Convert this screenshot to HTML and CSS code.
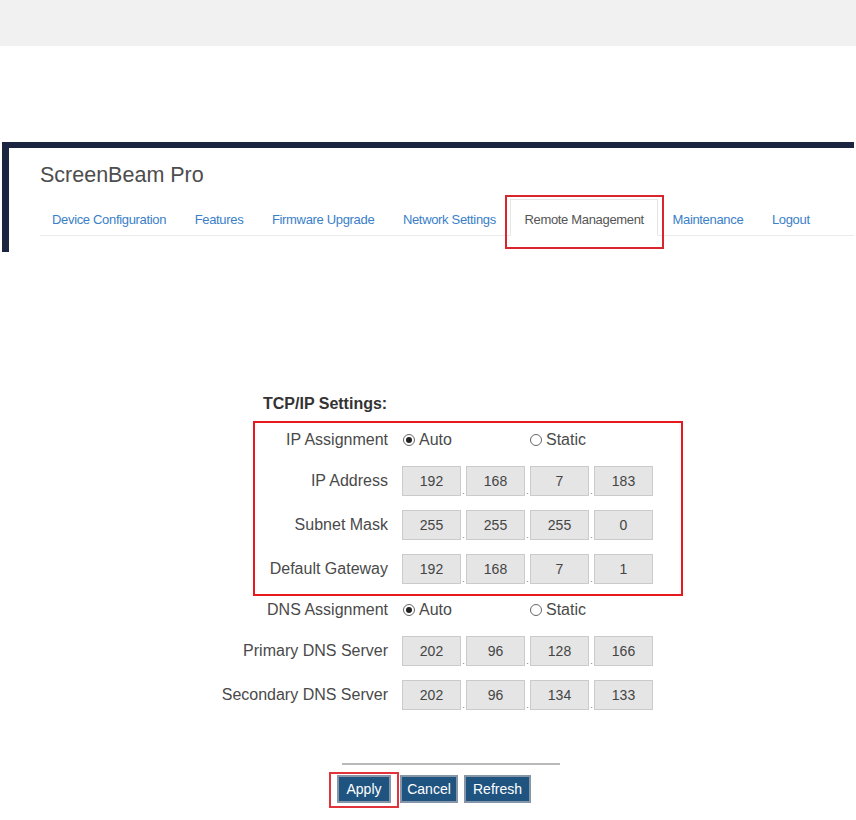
FILE: index.html
```html
<!DOCTYPE html>
<html lang="en">
<head>
    <meta charset="UTF-8">
    <meta name="viewport" content="width=device-width, initial-scale=1.0">
    <title>ScreenBeam Pro - Remote Management</title>
    <link rel="stylesheet" href="styles.css">
</head>
<body>
    <div class="top-bar"></div>

    <div class="shot-header">
        <h1 class="brand">ScreenBeam Pro</h1>
        <ul class="nav-tabs">
            <li><a href="#">Device Configuration</a></li>
            <li><a href="#">Features</a></li>
            <li><a href="#">Firmware Upgrade</a></li>
            <li><a href="#">Network Settings</a></li>
            <li class="active marked"><a href="#">Remote Management</a></li>
            <li><a href="#">Maintenance</a></li>
            <li><a href="#">Logout</a></li>
        </ul>
    </div>

    <form class="tcpip-form" action="#" method="POST">
        <h3 class="section-title">TCP/IP Settings:</h3>

        <div class="marked-group">
            <div class="form-row radio-row">
                <span class="row-label">IP Assignment</span>
                <div class="choices">
                    <label class="choice first"><span class="radio checked"></span>Auto</label>
                    <label class="choice"><span class="radio"></span>Static</label>
                </div>
            </div>
            <div class="form-row">
                <span class="row-label">IP Address</span>
                <div class="octets">
                    <input type="text" value="192" readonly><span class="dot">.</span>
                    <input type="text" value="168" readonly><span class="dot">.</span>
                    <input type="text" value="7" readonly><span class="dot">.</span>
                    <input type="text" value="183" readonly>
                </div>
            </div>
            <div class="form-row">
                <span class="row-label">Subnet Mask</span>
                <div class="octets">
                    <input type="text" value="255" readonly><span class="dot">.</span>
                    <input type="text" value="255" readonly><span class="dot">.</span>
                    <input type="text" value="255" readonly><span class="dot">.</span>
                    <input type="text" value="0" readonly>
                </div>
            </div>
            <div class="form-row">
                <span class="row-label">Default Gateway</span>
                <div class="octets">
                    <input type="text" value="192" readonly><span class="dot">.</span>
                    <input type="text" value="168" readonly><span class="dot">.</span>
                    <input type="text" value="7" readonly><span class="dot">.</span>
                    <input type="text" value="1" readonly>
                </div>
            </div>
        </div>

        <div class="form-row radio-row dns-row">
            <span class="row-label">DNS Assignment</span>
            <div class="choices">
                <label class="choice first"><span class="radio checked"></span>Auto</label>
                <label class="choice"><span class="radio"></span>Static</label>
            </div>
        </div>
        <div class="form-row">
            <span class="row-label">Primary DNS Server</span>
            <div class="octets">
                <input type="text" value="202" readonly><span class="dot">.</span>
                <input type="text" value="96" readonly><span class="dot">.</span>
                <input type="text" value="128" readonly><span class="dot">.</span>
                <input type="text" value="166" readonly>
            </div>
        </div>
        <div class="form-row">
            <span class="row-label">Secondary DNS Server</span>
            <div class="octets">
                <input type="text" value="202" readonly><span class="dot">.</span>
                <input type="text" value="96" readonly><span class="dot">.</span>
                <input type="text" value="134" readonly><span class="dot">.</span>
                <input type="text" value="133" readonly>
            </div>
        </div>

        <div class="divider"></div>

        <div class="button-row">
            <span class="marked-btn"><button type="submit" class="btn btn-apply">Apply</button></span>
            <button type="button" class="btn btn-cancel">Cancel</button>
            <button type="button" class="btn btn-refresh">Refresh</button>
        </div>
    </form>
</body>
</html>
```

FILE: styles.css
```css
/* ScreenBeam remote management page */
body {
    margin: 0;
    font-family: "Liberation Sans", Arial, sans-serif;
    background-color: #fff;
    color: #444;
}
.top-bar {
    height: 46px;
    background-color: #f1f1f1;
}

/* header screenshot */
.shot-header {
    margin: 96px 0 0 2px;
    width: 814px;
    height: 104px;
    border-top: 6px solid #1b2541;
    border-left: 7px solid #1b2541;
    padding-left: 31px;
}
.brand {
    margin: 0;
    padding-top: 15px;
    font-size: 21.5px;
    font-weight: normal;
    line-height: 24px;
    color: #4d4d4d;
}
.nav-tabs {
    display: flex;
    list-style: none;
    margin: 12px 0 0 0;
    padding: 0;
    border-bottom: 1px solid #ebebeb;
}
.nav-tabs li {
    position: relative;
    margin-bottom: -1px;
}
.nav-tabs a {
    display: block;
    padding: 13px 13.3px 8px;
    font-size: 13px;
    line-height: 14px;
    letter-spacing: -0.33px;
    color: #3a80c8;
    text-decoration: none;
    border: 1px solid transparent;
}
.nav-tabs li:first-child a {
    padding-left: 11px;
}
.nav-tabs .active a {
    color: #555;
    border-color: #e6e6e6;
    border-bottom-color: #fff;
    background-color: #fff;
}
.nav-tabs .marked::after {
    content: "";
    position: absolute;
    top: -4px;
    left: -5px;
    right: -6px;
    bottom: -13px;
    border: 2px solid #d9262e;
}

/* form */
.tcpip-form {
    margin: 143px 0 0 255px;
    padding-bottom: 20px;
    width: 426px;
}
.section-title {
    margin: 0 0 8px 8px;
    font-size: 16px;
    line-height: 18px;
    color: #333;
}
.marked-group {
    margin: 0 -2px;
    border: 2px solid #e8191d;
    padding: 5px 0 10px;
}
.form-row {
    display: grid;
    grid-template-columns: 133px auto;
    column-gap: 14px;
    align-items: center;
    margin-top: 14px;
}
.marked-group .form-row:first-child {
    margin-top: 0;
}
.dns-row {
    margin-top: 2px;
}
.row-label {
    display: flex;
    justify-content: flex-end;
    font-size: 16px;
    white-space: nowrap;
    color: #4a4a4a;
}
.radio-row {
    height: 24px;
}
.choices {
    display: flex;
    align-items: center;
    font-size: 16px;
    color: #4a4a4a;
}
.choice {
    display: flex;
    align-items: center;
}
.choice.first {
    width: 127px;
}
.radio {
    display: inline-flex;
    justify-content: center;
    align-items: center;
    box-sizing: border-box;
    width: 12px;
    height: 12px;
    margin: 0 4px 0 1px;
    border: 1px solid #666;
    border-radius: 50%;
    background-color: #fff;
}
.radio.checked::before {
    content: "";
    width: 6px;
    height: 6px;
    border-radius: 50%;
    background-color: #222;
}
.octets {
    display: flex;
    align-items: flex-end;
}
.octets input {
    width: 59px;
    height: 30px;
    box-sizing: border-box;
    border: 1px solid #cbcbcb;
    background-color: #e5e5e5;
    text-align: center;
    font-family: "Liberation Sans", Arial, sans-serif;
    font-size: 14px;
    color: #444;
    padding: 0;
}
.dot {
    width: 5px;
    font-size: 9px;
    line-height: 9px;
    text-align: center;
    color: #777;
}

/* buttons */
.divider {
    margin: 53px 0 0 87px;
    width: 218px;
    border-top: 2px solid #b9b9b9;
}
.button-row {
    display: flex;
    margin: 10px 0 0 82px;
}
.btn {
    height: 28px;
    padding: 0;
    border: 2px solid #8696a8;
    background-color: #1f5481;
    color: #fff;
    font-family: "Liberation Sans", Arial, sans-serif;
    font-size: 14px;
    cursor: pointer;
}
.btn-apply {
    width: 54px;
}
.btn-cancel {
    width: 58px;
    margin: 0 6px 0 9px;
}
.btn-refresh {
    width: 67px;
}
.marked-btn {
    position: relative;
    display: flex;
}
.marked-btn::after {
    content: "";
    position: absolute;
    top: -3px;
    left: -8px;
    right: -8px;
    bottom: -5px;
    border: 2px solid #e0333b;
}
```
